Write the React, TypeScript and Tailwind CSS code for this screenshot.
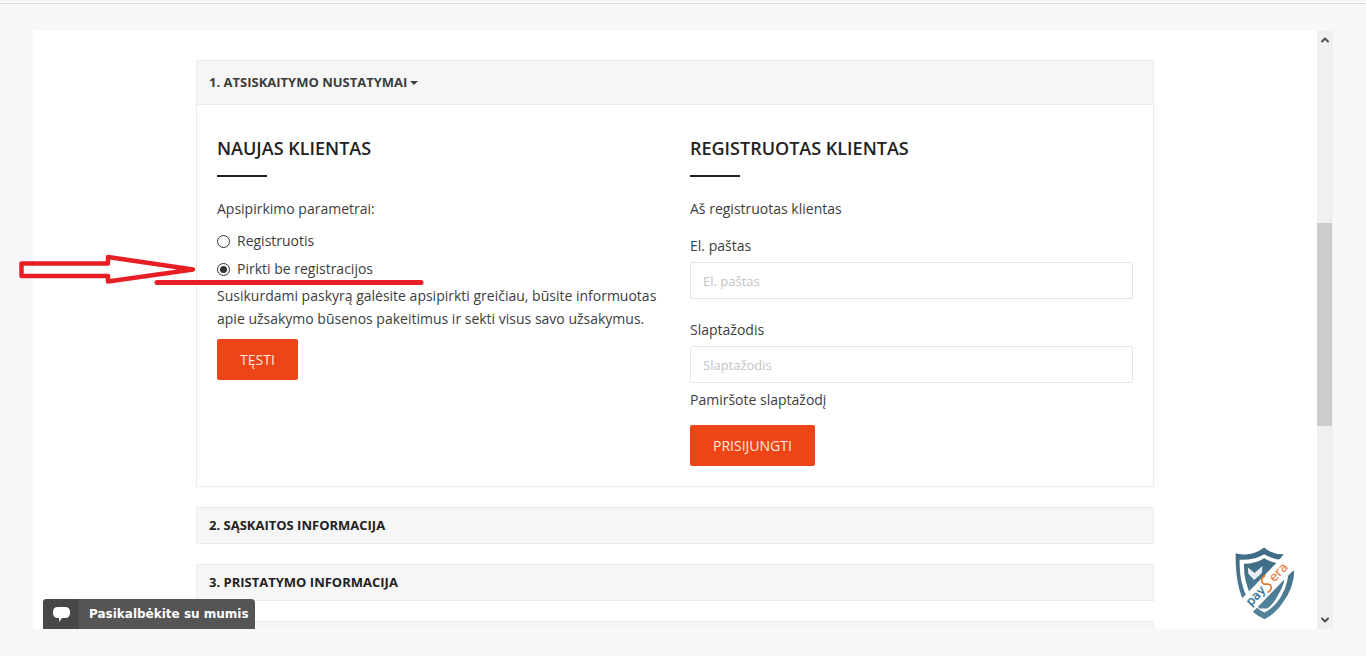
// src/App.tsx
import { useState } from "react";
import { ChevronDown, ChevronUp } from "lucide-react";

const steps = ["2. SĄSKAITOS INFORMACIJA", "3. PRISTATYMO INFORMACIJA"];

const SectionTitle = ({ children }: { children: string }) => (
  <div className="mb-5">
    <h2 className="text-lg leading-7 font-semibold text-[#222]">{children}</h2>
    <div className="mt-[13px] h-[2px] w-[50px] bg-[#222]" />
  </div>
);

const PayseraBadge = () => (
  <svg viewBox="98 50 196 225" className="absolute right-5 bottom-2 h-[75px] w-[65px]" aria-hidden="true">
    <defs>
      <linearGradient id="shield" x1="0" y1="0" x2="0" y2="1">
        <stop offset="0" stopColor="#3f6b84" />
        <stop offset="1" stopColor="#54839c" />
      </linearGradient>
    </defs>
    {/* shield rim and inner shield */}
    <path
      d="M109 71 Q155 84 195 54 Q225 82 279 72 L286 118 Q286 175 250 222 Q226 256 196 270 Q160 254 138 222 Q108 176 109 71Z"
      fill="url(#shield)"
    />
    <path
      d="M121 91 Q164 93 195 74 Q226 94 269 90 Q274 152 247 200 Q226 235 196 250 Q164 234 145 207 Q119 160 121 91Z"
      fill="#fff"
    />
    <path
      d="M134 103 Q170 102 195 86 Q221 103 256 102 Q264 154 240 192 Q220 230 204 238 L180 238 Q171 224 156 199 Q133 157 134 103Z"
      fill="url(#shield)"
    />
    <path d="M146 114 L166 131 L190 110 L188 131 L165 152 L147 133Z" fill="#e8edf8" />
    {/* diagonal band behind the name */}
    <path d="M124 212 L238 94 L258 70 L296 66 L296 118 L278 128 L157 252Z" fill="#fff" />
    <g transform="translate(155 232) rotate(-46)" fontFamily="DejaVu Sans, sans-serif">
      <text fontSize="36" fill="#2f6f91" stroke="#2f6f91">
        pay
      </text>
      <path d="M98 -34 Q80 -39 76 -25 Q75 -17 84 -11 Q91 -4 84 4 Q77 10 65 7" fill="none" stroke="#e8732c" strokeWidth="5" />
      <text x="101" fontSize="38" fill="#e8732c">
        era
      </text>
    </g>
  </svg>
);

const App = () => {
  const [account, setAccount] = useState("guest");
  const [email, setEmail] = useState("");
  const [password, setPassword] = useState("");

  return (
    <div className="relative flex h-screen flex-col overflow-hidden bg-[#f8f8fb] font-['Open_Sans',sans-serif] text-sm text-[#3d3d3d]">
      <div className="h-1 shrink-0 border-b border-[#d9d9de]" />

      <div className="mx-[33px] mt-[27px] mb-[27px] flex min-h-0 flex-1 bg-white">
        <main className="relative min-w-0 flex-1 overflow-hidden">
          <div className="mx-auto mt-[29px] flex max-w-[958px] flex-col gap-5">
            <section className="border border-[#ececec]">
              <button
                type="button"
                className="flex h-11 w-full items-center gap-[3px] border-b border-[#ececec] bg-[#f6f6f6] px-3 text-[13px] font-bold"
              >
                1. ATSISKAITYMO NUSTATYMAI
                <svg viewBox="0 0 8 4" className="h-1 w-2" fill="currentColor">
                  <path d="M0 0h8L4 4z" />
                </svg>
              </button>

              <div className="grid grid-cols-2 gap-[30px] px-5 pt-[29px] pb-5">
                <div>
                  <SectionTitle>NAUJAS KLIENTAS</SectionTitle>
                  <p className="leading-6">Apsipirkimo parametrai:</p>
                  <label className="mt-2 flex h-6 items-center gap-[7px]">
                    <input
                      type="radio"
                      name="account"
                      className="size-[13px] appearance-none rounded-full border border-[#333] bg-white bg-clip-content p-[2px] checked:bg-[#333]"
                      checked={account === "register"}
                      onChange={() => setAccount("register")}
                    />
                    Registruotis
                  </label>
                  <label className="mt-1 flex h-6 items-center gap-[7px]">
                    <input
                      type="radio"
                      name="account"
                      className="size-[13px] appearance-none rounded-full border border-[#333] bg-white bg-clip-content p-[2px] checked:bg-[#333]"
                      checked={account === "guest"}
                      onChange={() => setAccount("guest")}
                    />
                    Pirkti be registracijos
                  </label>
                  <p className="mt-[3px] leading-[23px]">
                    Susikurdami paskyrą galėsite apsipirkti greičiau, būsite informuotas apie užsakymo būsenos
                    pakeitimus ir sekti visus savo užsakymus.
                  </p>
                  <button type="button" className="mt-[9px] h-[41px] rounded-xs bg-[#ee4518] px-[23px] text-sm text-[#fde8df]">
                    TĘSTI
                  </button>
                </div>

                <form onSubmit={(e) => e.preventDefault()}>
                  <SectionTitle>REGISTRUOTAS KLIENTAS</SectionTitle>
                  <p className="leading-6">Aš registruotas klientas</p>
                  <label htmlFor="email" className="mt-[13px] block leading-6">
                    El. paštas
                  </label>
                  <input
                    id="email"
                    type="email"
                    placeholder="El. paštas"
                    className="mt-1 block h-[37px] w-full rounded-xs border border-[#e5e5e5] px-3 text-[13px] placeholder:text-[#c3c3c3]"
                    value={email}
                    onChange={(e) => setEmail(e.target.value)}
                  />
                  <label htmlFor="password" className="mt-[19px] block leading-6">
                    Slaptažodis
                  </label>
                  <input
                    id="password"
                    type="password"
                    placeholder="Slaptažodis"
                    className="mt-1 block h-[37px] w-full rounded-xs border border-[#e5e5e5] px-3 text-[13px] placeholder:text-[#c3c3c3]"
                    value={password}
                    onChange={(e) => setPassword(e.target.value)}
                  />
                  <a href="#" className="mt-[5px] block leading-6">
                    Pamiršote slaptažodį
                  </a>
                  <button type="submit" className="mt-[13px] h-[41px] rounded-xs bg-[#ee4518] px-[23px] text-sm text-[#fde8df]">
                    PRISIJUNGTI
                  </button>
                </form>
              </div>
            </section>

            {steps.map((step) => (
              <h3 key={step} className="flex h-[37px] shrink-0 items-center border border-[#ececec] bg-[#f6f6f6] px-3 text-[13px] font-bold text-[#222]">
                {step}
              </h3>
            ))}
            <div className="h-[37px] shrink-0 border border-[#ececec] bg-[#f6f6f6]" />
          </div>

          <PayseraBadge />

          <button
            type="button"
            className="absolute bottom-0 left-[10px] flex h-[30px] items-center overflow-hidden rounded-t bg-[#555] pr-[6px] font-['DejaVu_Sans',sans-serif] text-xs font-bold text-white"
          >
            <span className="mr-[10px] flex h-full w-9 items-center justify-center bg-[#484848]">
              <svg viewBox="0 0 17 15" className="h-[15px] w-[17px]" fill="#fff">
                <path d="M5 0h7q5 0 5 5v1q0 5-5 5h-3L6 15V11H5Q0 11 0 6V5Q0 0 5 0z" />
              </svg>
            </span>
            Pasikalbėkite su mumis
          </button>
        </main>

        <div className="flex w-4 flex-col items-center bg-[#f0f0f0] py-[3px]">
          <ChevronUp className="size-3 text-[#505050]" strokeWidth={4} />
          <div className="grow-[177]" />
          <div className="mr-px h-[203px] w-[15px] bg-[#cdcdcd]" />
          <div className="grow-[188]" />
          <ChevronDown className="size-3 text-[#505050]" strokeWidth={4} />
        </div>
      </div>

      {/* pointer to the guest checkout option */}
      <svg
        viewBox="0 0 410 36"
        className="pointer-events-none absolute top-[252px] left-4 h-9 w-[410px]"
        fill="none"
        stroke="#e81e25"
        strokeWidth="5"
        strokeLinejoin="round"
        strokeLinecap="round"
      >
        <path d="M5.500 11.500H92V5L177 17.500L92 29.500V24H5.500Z" strokeWidth="4.500" />
        <path d="M141 30.500H405" />
      </svg>
    </div>
  );
};

export default App;
